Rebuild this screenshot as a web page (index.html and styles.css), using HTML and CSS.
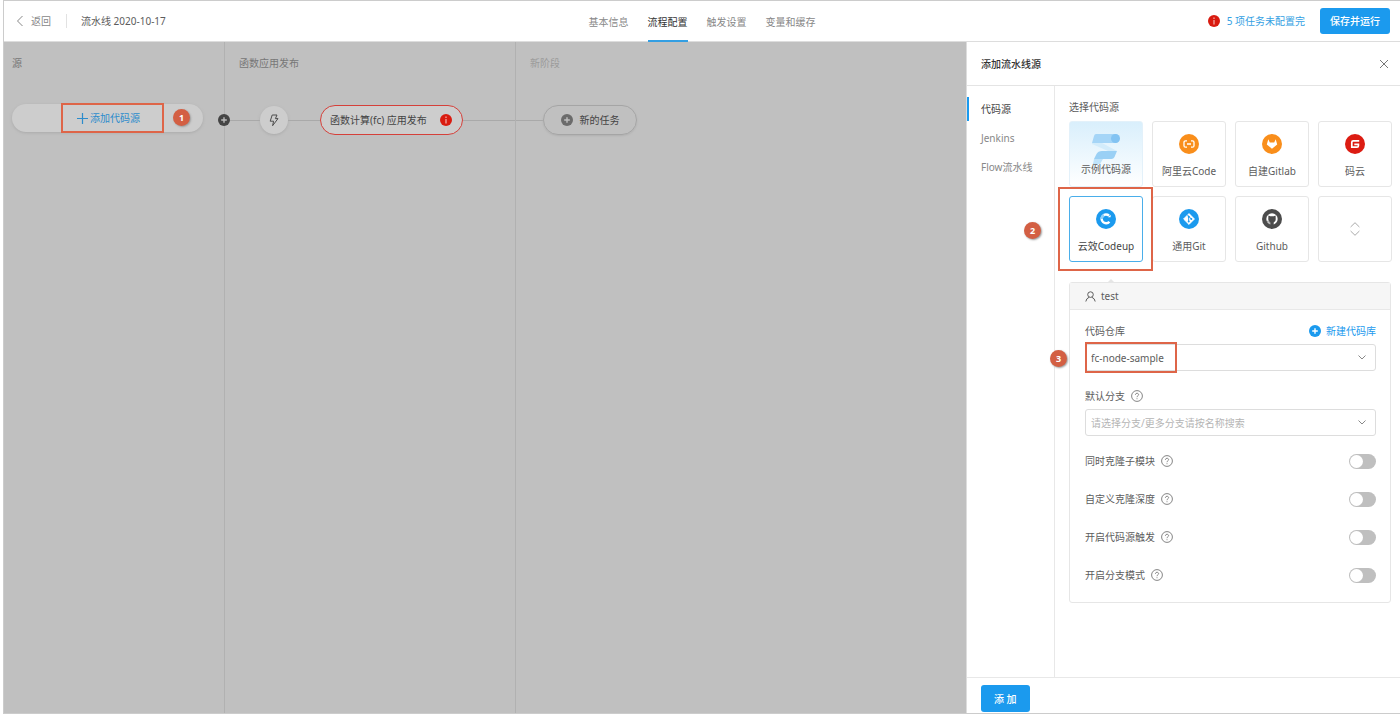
FILE: index.html
```html
<!DOCTYPE html>
<html lang="zh-CN">
<head>
<meta charset="utf-8">
<title>流水线 2020-10-17</title>
<link rel="stylesheet" href="styles.css">
</head>
<body>
<svg class="sprite" aria-hidden="true">
  <symbol id="help" viewBox="0 0 12 12"><circle cx="6" cy="6" r="5.4" fill="none" stroke="currentColor" stroke-width=".9"/><path d="M4.4 4.8C4.4 2.7 7.6 2.8 7.6 4.7C7.6 5.8 6 5.8 6 7.2M6 8.3V9.2" fill="none" stroke="currentColor" stroke-width=".9"/></symbol>
  <symbol id="alert" viewBox="0 0 12 12"><circle cx="6" cy="6" r="6" fill="#d91b10"/><path d="M6 5V9.4M6 2.6V3.9" stroke="#f3b5b0" stroke-width="1.2"/></symbol>
  <symbol id="plus-dot" viewBox="0 0 12 12"><circle cx="6" cy="6" r="6" fill="currentColor"/><path d="M6 3.2V8.8M3.2 6H8.8" stroke="var(--mark, #fff)" stroke-width="1.4"/></symbol>
</svg>
<div class="app">
  <header class="topbar">
    <div class="crumbs">
      <a class="back" href="#"><svg width="8" height="12" viewBox="0 0 8 12"><path d="M6.5 1L1.5 6L6.5 11" fill="none" stroke="currentColor"/></svg>返回</a>
      <span class="title">流水线 2020-10-17</span>
    </div>
    <nav class="tabs">
      <a class="tab" href="#">基本信息</a>
      <a class="tab active" href="#" aria-current="page">流程配置</a>
      <a class="tab" href="#">触发设置</a>
      <a class="tab" href="#">变量和缓存</a>
    </nav>
    <div class="actions">
      <a class="pending" href="#"><svg width="12" height="12"><use href="#alert"/></svg>5 项任务未配置完</a>
      <button class="primary save" type="button">保存并运行</button>
    </div>
  </header>
  <div class="workspace">
    <main class="canvas">
      <section class="stage source">
        <h2 class="stage-title">源</h2>
        <div class="track">
          <button class="add-source" type="button"><svg width="11" height="11" viewBox="0 0 11 11"><path d="M5.5 0V11M0 5.5H11" stroke="currentColor" stroke-width="1.2"/></svg>添加代码源</button>
          <span class="frame frame-source"></span>
          <span class="step step-one">1</span>
        </div>
      </section>
      <section class="stage deploy">
        <h2 class="stage-title">函数应用发布</h2>
        <div class="track">
          <button class="insert" type="button" aria-label="插入阶段"><svg width="12" height="12"><use href="#plus-dot"/></svg></button>
          <span class="wire"></span>
          <button class="trigger" type="button" aria-label="触发方式"><svg width="10" height="13" viewBox="0 0 10 13"><path d="M3.2 1H8L6.4 4.6H9L3.6 11.7L4.6 7.2H1.2Z" fill="none" stroke="#4d4d4d" stroke-linejoin="round"/></svg></button>
          <span class="wire link"></span>
          <button class="task failed" type="button">函数计算(fc) 应用发布<svg width="12" height="12"><use href="#alert"/></svg></button>
          <span class="wire tail"></span>
        </div>
      </section>
      <section class="stage fresh">
        <h2 class="stage-title">新阶段</h2>
        <div class="track">
          <span class="wire lead"></span>
          <button class="task new-task" type="button"><svg width="12" height="12"><use href="#plus-dot"/></svg>新的任务</button>
        </div>
      </section>
    </main>
    <aside class="drawer">
      <div class="drawer-head">
        <h1 class="drawer-title">添加流水线源</h1>
        <button class="close" type="button" aria-label="关闭"><svg width="10" height="10" viewBox="0 0 10 10"><path d="M1 1L9 9M9 1L1 9" stroke="currentColor"/></svg></button>
      </div>
      <div class="drawer-body">
        <nav class="kinds">
          <a class="kind active" href="#">代码源</a>
          <a class="kind" href="#">Jenkins</a>
          <a class="kind" href="#">Flow流水线</a>
        </nav>
        <div class="content">
          <h2 class="section-title">选择代码源</h2>
          <div class="cards">
            <button class="card sample" type="button">
              <svg width="32" height="32" viewBox="0 0 32 32"><path d="M6 2H25A4.500 4.500 0 0 1 25 11H2L4 4Q4.500 2 6 2Z" fill="#a5d5f7"/><path d="M2 11H12L27 19H18L2 12Z" fill="#d3ecfb"/><path d="M12 19H27L24.500 25Q23.500 27 21.500 27H4L6.500 22Q8 19 12 19Z" fill="#9ad0f5"/><path d="M4 27H13L10 32H3Z" fill="#bfe3fa"/><circle cx="25.500" cy="6.500" r="4.500" fill="#83c3f2"/></svg>
              <span>示例代码源</span>
            </button>
            <button class="card" type="button">
              <svg width="20" height="20" viewBox="0 0 20 20"><circle cx="10" cy="10" r="10" fill="#f98e1b"/><path d="M8 6.800H6.500Q5 6.800 5 8.300V11.700Q5 13.200 6.500 13.200H8M12 6.800H13.500Q15 6.800 15 8.300V11.700Q15 13.200 13.500 13.200H12M8 10H12" fill="none" stroke="#fff" stroke-width="1.300"/></svg>
              <span>阿里云Code</span>
            </button>
            <button class="card" type="button">
              <svg width="20" height="20" viewBox="0 0 20 20"><circle cx="10" cy="10" r="10" fill="#f98e1b"/><path d="M6.300 5.200L7.800 8.500H12.200L13.700 5.200L15.200 10.600L10 14.800L4.800 10.600Z" fill="#fff"/></svg>
              <span>自建Gitlab</span>
            </button>
            <button class="card" type="button">
              <svg width="20" height="20" viewBox="0 0 20 20"><circle cx="10" cy="10" r="10" fill="#dc1c12"/><path d="M14.200 6.800H8.200Q6.800 6.800 6.800 8.200V13.200H12Q13.400 13.200 13.400 11.800V10.400H9.300" fill="none" stroke="#fff" stroke-width="1.700"/></svg>
              <span>码云</span>
            </button>
            <div class="picked">
              <button class="card selected" type="button" aria-pressed="true">
                <svg width="20" height="20" viewBox="0 0 20 20"><circle cx="10" cy="10" r="10" fill="#1b9aee"/><path d="M13 6.600A4.400 4.400 0 1 0 13.400 12.700" fill="none" stroke="#fff" stroke-width="2.400"/><path d="M5.600 10A4.400 4.400 0 0 1 8 6.100" fill="none" stroke="#8fd0fa" stroke-width="2.400"/><path d="M11.800 8.200H14.600V5.800Z" fill="#fff"/></svg>
                <span>云效Codeup</span>
              </button>
              <span class="frame frame-card"></span>
              <span class="step step-two">2</span>
            </div>
            <button class="card" type="button">
              <svg width="20" height="20" viewBox="0 0 20 20"><circle cx="10" cy="10" r="10" fill="#1b9aee"/><path d="M10 4.600L15.400 10L10 15.400L4.600 10Z" fill="#fff" stroke="#fff" stroke-linejoin="round"/><path d="M8 5.500L12.300 10M9.700 7.500V12.800" stroke="#1b9aee" fill="none"/><circle cx="9.700" cy="7.700" r="1" fill="#1b9aee"/><circle cx="9.700" cy="12.500" r="1" fill="#1b9aee"/><circle cx="12.300" cy="10" r="1" fill="#1b9aee"/></svg>
              <span>通用Git</span>
            </button>
            <button class="card" type="button">
              <svg width="20" height="20" viewBox="0 0 20 20"><circle cx="10" cy="10" r="10" fill="#4c4c4c"/><circle cx="10" cy="10" r="5.700" fill="#fff"/><path d="M8.300 16V13.600Q6 13 6.300 9.500L6.400 6.500L8.300 7.300H11.700L13.600 6.500L13.700 9.500Q14 13 11.700 13.600V16Z" fill="#4c4c4c"/><path d="M5.300 12.200Q6.400 12.300 6.900 13.500Q7.300 14.200 8.400 14" fill="none" stroke="#4c4c4c" stroke-width=".8"/></svg>
              <span>Github</span>
            </button>
            <button class="card more" type="button" aria-label="更多"><svg width="10" height="14" viewBox="0 0 10 14"><path d="M.6 5L5 .7L9.400 5M.6 9L5 13.300L9.400 9" fill="none" stroke="currentColor"/></svg></button>
          </div>
          <form class="panel">
            <div class="panel-head"><svg width="11" height="11" viewBox="0 0 11 11"><circle cx="5.500" cy="3.600" r="2.800" fill="none" stroke="currentColor"/><path d="M.8 10.500Q1.200 7.400 4.200 6.200M10.200 10.500Q9.800 7.400 6.800 6.200" fill="none" stroke="currentColor"/></svg>test</div>
            <div class="panel-body">
              <div class="field">
                <div class="field-head"><label for="repo">代码仓库</label><a class="create" href="#"><svg width="12" height="12"><use href="#plus-dot"/></svg>新建代码库</a></div>
                <div class="select-wrap">
                  <select class="select" id="repo"><option>fc-node-sample</option></select>
                  <svg class="chevron" width="8" height="5" viewBox="0 0 8 5"><path d="M.5 .5L4 4L7.500 .5" fill="none" stroke="currentColor"/></svg>
                  <span class="frame frame-repo"></span>
                  <span class="step step-three">3</span>
                </div>
              </div>
              <div class="field">
                <div class="field-head"><label for="branch">默认分支</label><svg class="help" width="12" height="12"><use href="#help"/></svg></div>
                <div class="select-wrap">
                  <select class="select empty" id="branch"><option>请选择分支/更多分支请按名称搜索</option></select>
                  <svg class="chevron" width="8" height="5" viewBox="0 0 8 5"><path d="M.5 .5L4 4L7.500 .5" fill="none" stroke="currentColor"/></svg>
                </div>
              </div>
              <div class="toggles">
                <div class="toggle"><label for="submodule">同时克隆子模块</label><svg class="help" width="12" height="12"><use href="#help"/></svg><input class="switch" type="checkbox" role="switch" id="submodule"></div>
                <div class="toggle"><label for="depth">自定义克隆深度</label><svg class="help" width="12" height="12"><use href="#help"/></svg><input class="switch" type="checkbox" role="switch" id="depth"></div>
                <div class="toggle"><label for="hook">开启代码源触发</label><svg class="help" width="12" height="12"><use href="#help"/></svg><input class="switch" type="checkbox" role="switch" id="hook"></div>
                <div class="toggle"><label for="mode">开启分支模式</label><svg class="help" width="12" height="12"><use href="#help"/></svg><input class="switch" type="checkbox" role="switch" id="mode"></div>
              </div>
            </div>
          </form>
        </div>
      </div>
      <footer class="drawer-foot"><button class="primary add" type="button">添 加</button></footer>
    </aside>
  </div>
</div>
</body>
</html>
```
FILE: styles.css
```css
* { box-sizing: border-box; }

body {
  margin: 0;
  background: #fff;
  color: #5c5c5c;
  font: 10px/16px "Noto Sans", "Noto Sans CJK SC", sans-serif;
}

a { color: inherit; text-decoration: none; }
h1, h2 { margin: 0; font-size: inherit; font-weight: 400; }
button, select { margin: 0; padding: 0; font: inherit; color: inherit; }
button { border: 0; background: none; cursor: pointer; }
svg { flex: none; }
.sprite { display: none; }

.app {
  display: flex;
  flex-direction: column;
  min-height: 100vh;
  margin-left: 3px;
  border: 1px solid #ccc;
  border-right: 0;
}

/* Top bar */
.topbar {
  display: grid;
  grid-template-columns: 1fr auto 1fr;
  height: 41px;
  border-bottom: 1px solid #ddd;
}
.crumbs { display: flex; align-items: center; padding-left: 12px; }
.back { display: flex; align-items: center; gap: 7px; padding-right: 15px; color: #888; }
.title { padding-left: 14px; border-left: 1px solid #e2e2e2; line-height: 14px; }
.tabs { display: flex; gap: 19px; margin-bottom: -1px; }
.tab { display: flex; align-items: center; color: #888; border-bottom: 2px solid transparent; border-top: 2px solid transparent; }
.tab.active { color: #333; border-bottom-color: #349fe3; }
.actions { display: flex; justify-content: flex-end; align-items: center; gap: 15px; padding-right: 10px; color: #349fe3; }
.pending { display: flex; align-items: center; gap: 7px; }

.primary { border-radius: 3px; background: #1b9aee; color: #fff; font-weight: 500; }
.save { height: 26px; padding: 0 10px; }
.add { height: 27px; padding: 0 13px; }

.workspace { display: flex; flex: 1; }

/* Pipeline canvas */
.canvas { display: flex; flex: 1; background: #c0c0c0; color: #444; }
.stage { padding-top: 13px; border-right: 1px solid #b1b1b1; }
.source { width: 221px; }
.deploy { width: 291px; }
.fresh { flex: 1; border-right: 0; }
.stage-title { padding-left: 14px; color: #777; }
.source .stage-title { padding-left: 8px; }
.fresh .stage-title { color: #9b9b9b; }
.track { position: relative; display: flex; align-items: center; height: 30px; margin-top: 34px; }
.source .track { margin-top: 32px; }
.wire { flex: 1; height: 1px; background: #a9a9a9; }
.wire.link { flex: none; width: 32px; }
.wire.tail { flex: none; width: 52px; }
.wire.lead { flex: none; width: 27px; }

.add-source {
  display: flex;
  align-items: center;
  justify-content: center;
  gap: 2px;
  width: 191px;
  height: 28px;
  margin-left: 8px;
  padding-left: 2px;
  border-radius: 14px;
  background: #cdcdcd;
  box-shadow: 0 1px 3px #aaa;
  color: #2c8ccc;
}
.insert { display: flex; margin-left: -7px; color: #444; --mark: #bbb; }
.trigger {
  display: flex;
  align-items: center;
  justify-content: center;
  width: 28px;
  height: 28px;
  border-radius: 50%;
  background: #cdcdcd;
  box-shadow: 0 1px 3px #aaa;
}
.task {
  display: flex;
  align-items: center;
  gap: 12px;
  height: 30px;
  border: 1px solid #a5a5a5;
  border-radius: 15px;
  white-space: nowrap;
}
.failed { width: 143px; justify-content: space-between; padding: 0 10px 0 9px; border-color: #d5403a; background: #cdcdcd; }
.new-task { gap: 7px; width: 94px; justify-content: center; box-shadow: 0 1px 2px #b0b0b0; }
.new-task svg { color: #6b6b6b; --mark: #c0c0c0; }

/* Numbered walkthrough marks */
.frame { position: absolute; border: 2px solid #de6548; pointer-events: none; }
.step {
  position: absolute;
  width: 17px;
  height: 17px;
  border-radius: 50%;
  background: #d35f43;
  box-shadow: 1px 1px 2px #999;
  color: #fff;
  font-size: 9px;
  font-weight: 700;
  line-height: 17px;
  text-align: center;
}
.frame-source { left: 57px; top: 0; width: 103px; height: 30px; }
.step-one { left: 169px; top: 6px; }
.frame-card { inset: -9px -10px -9px -11px; }
.step-two { left: -45px; top: 26px; }
.frame-repo { left: 0; top: -2px; width: 92px; height: 31px; }
.step-three { left: -35px; top: 6px; }

/* Drawer */
.drawer { display: flex; flex-direction: column; width: 434px; background: #fff; border-left: 1px solid #ddd; }
.drawer-head {
  display: flex;
  align-items: center;
  justify-content: space-between;
  height: 44px;
  padding: 0 11px 0 14px;
  border-bottom: 1px solid #e4e4e4;
}
.drawer-title { color: #333; font-weight: 500; }
.close { display: flex; color: #777; }
.drawer-body { display: flex; flex: 1; }
.kinds { display: flex; flex-direction: column; gap: 5px; width: 88px; padding-top: 11px; border-right: 1px solid #e8e8e8; }
.kind { padding: 0 12px; border-left: 2px solid transparent; line-height: 24px; color: #888; }
.kind.active { border-left-color: #1b9aee; color: #444; }
.content { flex: 1; padding: 13px 8px 0 14px; }
.section-title { margin-bottom: 6px; }

.cards { display: grid; grid-template-columns: repeat(4, 1fr); gap: 9px; }
.card {
  display: flex;
  flex-direction: column;
  align-items: center;
  gap: 9px;
  width: 100%;
  height: 66px;
  padding-top: 12px;
  border: 1px solid #e6e6e6;
  border-radius: 3px;
  background: #fff;
}
.sample { gap: 0; padding-top: 10px; background: linear-gradient(#d9effc, #fff); border-color: #e3f1fa; }
.sample svg { margin-bottom: -3px; }
.selected { border-color: #4aaeea; color: #444; }
.more { justify-content: center; padding: 0; color: #aaa; }
.picked { position: relative; }

.panel { position: relative; margin: 20px 1px 0 0; border: 1px solid #e6e6e6; border-radius: 3px; }
.panel::before {
  content: "";
  position: absolute;
  left: 37px;
  top: -4px;
  border: solid transparent;
  border-width: 0 4px 4px;
  border-bottom-color: #e6e6e6;
}
.panel-head { display: flex; align-items: center; gap: 5px; height: 27px; padding: 0 15px; border-bottom: 1px solid #e8e8e8; background: #f6f6f6; }
.panel-body { padding: 13px 14px 19px 15px; }
.field { margin-bottom: 17px; }
.field-head { display: flex; align-items: center; gap: 6px; margin-bottom: 5px; }
.create { display: flex; align-items: center; gap: 5px; margin-left: auto; color: #1b9aee; }
.help { color: #777; }
.select-wrap { position: relative; display: flex; }
.select { appearance: none; width: 100%; height: 27px; padding: 0 30px 0 5px; border: 1px solid #ddd; border-radius: 3px; background: #fff; }
.select.empty { color: #b5b5b5; }
.chevron { position: absolute; right: 10px; top: 11px; color: #888; pointer-events: none; }

.toggles { display: grid; gap: 22px; }
.toggle { display: flex; align-items: center; gap: 6px; height: 16px; }
.switch { appearance: none; display: flex; width: 27px; height: 15px; margin: 0 0 0 auto; padding: 1px; border-radius: 8px; background: #bfbfbf; }
.switch::before { content: ""; width: 13px; height: 13px; border-radius: 50%; background: #fff; }
.switch:checked { justify-content: flex-end; background: #1b9aee; }

.drawer-foot { padding: 7px 14px 1px; border-top: 1px solid #e8e8e8; }
.drawer-foot .add { display: block; }
```
